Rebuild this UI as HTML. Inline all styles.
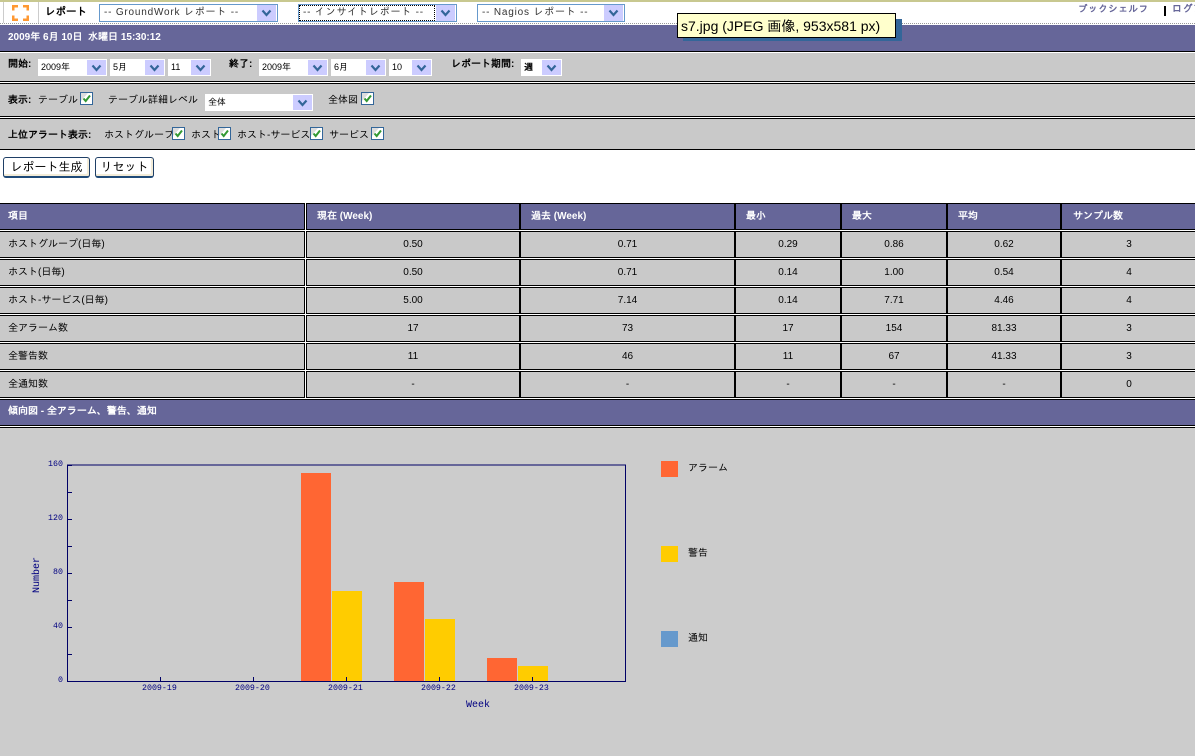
<!DOCTYPE html>
<html lang="ja"><head><meta charset="utf-8"><title>レポート</title>
<style>
html,body{margin:0;padding:0;background:#fff;width:1195px;height:756px;overflow:hidden}
body{position:relative;font-family:"Liberation Sans","IPAGothic","Noto Sans CJK JP",sans-serif;font-size:10px;color:#000}
div,span.a{position:absolute;box-sizing:border-box}
.t{white-space:nowrap;line-height:14px;height:14px}
.b{font-weight:bold}
.w{color:#fff;font-weight:bold}
.f{background:#c9c9c9;left:0;width:1195px}
.k{background:#000;left:0;width:1195px;height:1px}
.p{background:#666699;left:0;width:1195px}
.s{background:#fff;height:17px;white-space:nowrap;line-height:17px;padding-left:3px;font-size:9px}
.s.o{border:1px solid #6699cc;height:18px;line-height:16px;letter-spacing:.8px;color:#333;padding-left:4px;font-size:10px}
.ar{background:#ccccff;width:19px;top:1px;height:15px;right:1px}
.s.o .ar{top:0;right:1px;height:16px}
.ar svg{position:absolute;left:4px;top:4px;width:11px;height:8px}
.ck{width:13px;height:13px;background:#fff;border:1px solid #336699}
.ck svg{position:absolute;left:0;top:0;width:11px;height:11px}
.btn{background:#fff;border:1px solid #1f3f66;border-right-color:#1f3f66;border-bottom:2px solid #1f4a78;border-radius:3px;height:21px;top:157px;text-align:center;line-height:19px;font-size:12px;box-shadow:inset -2px -2px 0 #f3ecd8}
.c{background:#c9c9c9;border:1px solid #000;height:27px;line-height:25px;white-space:nowrap}
.c.h{background:#666699;color:#fff;font-weight:bold}
.n{text-align:center}
.m{font-family:"Liberation Mono",monospace;font-size:8.3px;color:#000080;white-space:nowrap;line-height:10px;height:10px}
.ax{background:#000066}
</style></head><body>
<svg width="0" height="0" style="position:absolute"><defs>
<symbol id="v" viewBox="0 0 11 8"><path d="M1.5 1.5 L5.5 6 L9.5 1.5" fill="none" stroke="#336699" stroke-width="2.2"/></symbol>
<symbol id="g" viewBox="0 0 11 11"><path d="M0 0H7L0 8Z" fill="#ddd"/><path d="M2.5 5.5 L4.7 8 L9 2.5" fill="none" stroke="#339933" stroke-width="2"/></symbol>
</defs></svg>

<div style="left:0;top:0;width:1195px;height:2px;background:#c8c890"></div>
<div style="left:3px;top:2px;width:1px;height:21px;background:#ccc"></div>
<div style="left:38px;top:2px;width:1px;height:21px;background:#ccc"></div>
<svg style="position:absolute;left:12px;top:5px" width="17" height="16" viewBox="0 0 17 16"><path d="M0 0H6V2.500H2.500V5.500H0ZM11 0H17V5.500H14.500V2.500H11ZM0 10.500H2.500V13.500H6V16H0ZM14.500 10.500H17V16H11V13.500H14.500Z" fill="#ff9933"/></svg>
<div class="t b" style="left:45px;top:5px;font-size:10.5px">レポート</div>
<div class="s o" style="left:99px;top:4px;width:179px">-- GroundWork レポート --<div class="ar"><svg><use href="#v"/></svg></div></div>
<div class="s o" style="left:298px;top:4px;width:159px;border-color:#6699cc">-- インサイトレポート --<div class="ar"><svg><use href="#v"/></svg></div></div>
<div style="left:299px;top:5px;width:136px;height:16px;border:1px dotted #000"></div>
<div class="s o" style="left:477px;top:4px;width:148px">-- Nagios レポート --<div class="ar"><svg><use href="#v"/></svg></div></div>
<div class="t b" style="left:1078px;top:3px;color:#666699;letter-spacing:.6px;font-size:9.5px">ブックシェルフ</div>
<div style="left:1164px;top:6px;width:2px;height:10px;background:#000"></div>
<div class="t b" style="left:1172px;top:3px;color:#666699;letter-spacing:.6px;font-size:10px">ログアウト</div>
<div style="left:0;top:23px;width:1195px;height:2px;border-top:1px dotted #999"></div>

<div class="p" style="top:25px;height:26px"></div>
<div class="t w" style="left:8px;top:31px;font-size:10px">2009年 6月 10日&nbsp; 水曜日 15:30:12</div>
<div class="k" style="top:51px"></div>

<div class="f" style="top:53px;height:28px"></div>
<div class="k" style="top:81px"></div>
<div class="k" style="top:83px"></div>
<div class="f" style="top:84px;height:32px"></div>
<div class="k" style="top:116px"></div>
<div class="k" style="top:118px"></div>
<div class="f" style="top:119px;height:30px"></div>
<div class="k" style="top:149px"></div>

<div class="t b" style="left:8px;top:58px">開始:</div>
<div class="s" style="left:38px;top:59px;width:69px">2009年<div class="ar"><svg><use href="#v"/></svg></div></div>
<div class="s" style="left:110px;top:59px;width:55px">5月<div class="ar"><svg><use href="#v"/></svg></div></div>
<div class="s" style="left:168px;top:59px;width:43px">11<div class="ar"><svg><use href="#v"/></svg></div></div>
<div class="t b" style="left:229px;top:58px">終了:</div>
<div class="s" style="left:259px;top:59px;width:69px">2009年<div class="ar"><svg><use href="#v"/></svg></div></div>
<div class="s" style="left:331px;top:59px;width:55px">6月<div class="ar"><svg><use href="#v"/></svg></div></div>
<div class="s" style="left:389px;top:59px;width:43px">10<div class="ar"><svg><use href="#v"/></svg></div></div>
<div class="t b" style="left:451px;top:58px">レポート期間:</div>
<div class="s" style="left:521px;top:59px;width:41px;font-weight:bold">週<div class="ar"><svg><use href="#v"/></svg></div></div>

<div class="t b" style="left:8px;top:94px">表示:</div>
<div class="t" style="left:38px;top:94px">テーブル</div>
<div class="ck" style="left:80px;top:92px"><svg><use href="#g"/></svg></div>
<div class="t" style="left:108px;top:94px">テーブル詳細レベル</div>
<div class="s" style="left:205px;top:94px;width:108px">全体<div class="ar"><svg><use href="#v"/></svg></div></div>
<div class="t" style="left:328px;top:94px">全体図</div>
<div class="ck" style="left:361px;top:92px"><svg><use href="#g"/></svg></div>

<div class="t b" style="left:8px;top:129px">上位アラート表示:</div>
<div class="t" style="left:104px;top:129px">ホストグループ</div>
<div class="ck" style="left:172px;top:127px"><svg><use href="#g"/></svg></div>
<div class="t" style="left:191px;top:129px">ホスト</div>
<div class="ck" style="left:218px;top:127px"><svg><use href="#g"/></svg></div>
<div class="t" style="left:237px;top:129px">ホスト-サービス</div>
<div class="ck" style="left:310px;top:127px"><svg><use href="#g"/></svg></div>
<div class="t" style="left:329px;top:129px">サービス</div>
<div class="ck" style="left:371px;top:127px"><svg><use href="#g"/></svg></div>

<div class="btn" style="left:3px;width:87px">レポート生成</div>
<div class="btn" style="left:95px;width:59px">リセット</div>

<!-- table header -->
<div class="c h" style="top:203px;left:-1px;width:306px;padding-left:8px">項目</div>
<div class="c h" style="top:203px;left:306px;width:214px;padding-left:10px">現在 (Week)</div>
<div class="c h" style="top:203px;left:520px;width:215px;padding-left:10px">過去 (Week)</div>
<div class="c h" style="top:203px;left:735px;width:106px;padding-left:10px">最小</div>
<div class="c h" style="top:203px;left:841px;width:106px;padding-left:10px">最大</div>
<div class="c h" style="top:203px;left:947px;width:114px;padding-left:10px">平均</div>
<div class="c h" style="top:203px;left:1061px;width:136px;padding-left:11px">サンプル数</div>

<!-- rows -->
<div class="c" style="top:231px;left:-1px;width:306px;padding-left:8px">ホストグループ(日毎)</div>
<div class="c n" style="top:231px;left:306px;width:214px">0.50</div>
<div class="c n" style="top:231px;left:520px;width:215px">0.71</div>
<div class="c n" style="top:231px;left:735px;width:106px">0.29</div>
<div class="c n" style="top:231px;left:841px;width:106px">0.86</div>
<div class="c n" style="top:231px;left:947px;width:114px">0.62</div>
<div class="c n" style="top:231px;left:1061px;width:136px">3</div>

<div class="c" style="top:259px;left:-1px;width:306px;padding-left:8px">ホスト(日毎)</div>
<div class="c n" style="top:259px;left:306px;width:214px">0.50</div>
<div class="c n" style="top:259px;left:520px;width:215px">0.71</div>
<div class="c n" style="top:259px;left:735px;width:106px">0.14</div>
<div class="c n" style="top:259px;left:841px;width:106px">1.00</div>
<div class="c n" style="top:259px;left:947px;width:114px">0.54</div>
<div class="c n" style="top:259px;left:1061px;width:136px">4</div>

<div class="c" style="top:287px;left:-1px;width:306px;padding-left:8px">ホスト-サービス(日毎)</div>
<div class="c n" style="top:287px;left:306px;width:214px">5.00</div>
<div class="c n" style="top:287px;left:520px;width:215px">7.14</div>
<div class="c n" style="top:287px;left:735px;width:106px">0.14</div>
<div class="c n" style="top:287px;left:841px;width:106px">7.71</div>
<div class="c n" style="top:287px;left:947px;width:114px">4.46</div>
<div class="c n" style="top:287px;left:1061px;width:136px">4</div>

<div class="c" style="top:315px;left:-1px;width:306px;padding-left:8px">全アラーム数</div>
<div class="c n" style="top:315px;left:306px;width:214px">17</div>
<div class="c n" style="top:315px;left:520px;width:215px">73</div>
<div class="c n" style="top:315px;left:735px;width:106px">17</div>
<div class="c n" style="top:315px;left:841px;width:106px">154</div>
<div class="c n" style="top:315px;left:947px;width:114px">81.33</div>
<div class="c n" style="top:315px;left:1061px;width:136px">3</div>

<div class="c" style="top:343px;left:-1px;width:306px;padding-left:8px">全警告数</div>
<div class="c n" style="top:343px;left:306px;width:214px">11</div>
<div class="c n" style="top:343px;left:520px;width:215px">46</div>
<div class="c n" style="top:343px;left:735px;width:106px">11</div>
<div class="c n" style="top:343px;left:841px;width:106px">67</div>
<div class="c n" style="top:343px;left:947px;width:114px">41.33</div>
<div class="c n" style="top:343px;left:1061px;width:136px">3</div>

<div class="c" style="top:371px;left:-1px;width:306px;padding-left:8px">全通知数</div>
<div class="c n" style="top:371px;left:306px;width:214px">-</div>
<div class="c n" style="top:371px;left:520px;width:215px">-</div>
<div class="c n" style="top:371px;left:735px;width:106px">-</div>
<div class="c n" style="top:371px;left:841px;width:106px">-</div>
<div class="c n" style="top:371px;left:947px;width:114px">-</div>
<div class="c n" style="top:371px;left:1061px;width:136px">0</div>

<!-- section -->
<div class="k" style="top:399px"></div>
<div class="p" style="top:400px;height:25px"></div>
<div class="t w" style="left:8px;top:405px">傾向図 - 全アラーム、警告、通知</div>
<div class="k" style="top:425px"></div>
<div class="k" style="top:427px"></div>
<div style="left:0;top:428px;width:1195px;height:328px;background:#cccccc"></div>

<!-- chart -->
<svg style="position:absolute;left:0;top:428px" width="640" height="328" viewBox="0 428 640 328" shape-rendering="crispEdges">
<rect x="301" y="473" width="30" height="208" fill="#ff6633"/>
<rect x="332" y="591" width="30" height="90" fill="#ffcc00"/>
<rect x="394" y="582" width="30" height="99" fill="#ff6633"/>
<rect x="425" y="619" width="30" height="62" fill="#ffcc00"/>
<rect x="487" y="658" width="30" height="23" fill="#ff6633"/>
<rect x="518" y="666" width="30" height="15" fill="#ffcc00"/>
<rect x="67.500" y="465" width="558" height="216.500" fill="none" stroke="#000066" stroke-width="1"/>
<path d="M68 465.500h4M68 492.500h4M68 519.500h4M68 546.500h4M68 573.500h4M68 600.500h4M68 627.500h4M68 654.500h4M160.500 677v4M253.500 677v4M346.500 677v4M439.500 677v4M532.500 677v4" stroke="#000066" stroke-width="1"/>
</svg>
<div class="m" style="left:48px;top:460px">160</div>
<div class="m" style="left:48px;top:514px">120</div>
<div class="m" style="left:53px;top:568px">80</div>
<div class="m" style="left:53px;top:622px">40</div>
<div class="m" style="left:58px;top:676px">0</div>
<div class="m" style="left:142px;top:684px">2009-19</div>
<div class="m" style="left:235px;top:684px">2009-20</div>
<div class="m" style="left:328px;top:684px">2009-21</div>
<div class="m" style="left:421px;top:684px">2009-22</div>
<div class="m" style="left:514px;top:684px">2009-23</div>
<div class="m" style="left:466px;top:700px;font-size:10px;line-height:12px;height:12px">Week</div>
<div class="m" style="left:18px;top:569px;width:40px;font-size:10px;line-height:12px;height:12px;text-align:center;transform:rotate(-90deg)">Number</div>

<div style="left:661px;top:461px;width:17px;height:16px;background:#ff6633"></div>
<div class="t" style="left:688px;top:462px">アラーム</div>
<div style="left:661px;top:546px;width:17px;height:16px;background:#ffcc00"></div>
<div class="t" style="left:688px;top:547px">警告</div>
<div style="left:661px;top:631px;width:17px;height:16px;background:#6699cc"></div>
<div class="t" style="left:688px;top:632px">通知</div>

<!-- tooltip -->
<div style="left:683px;top:19px;width:219px;height:22px;background:#336699"></div>
<div style="left:677px;top:13px;width:219px;height:25px;background:#ffffcc;border:1px solid #000;line-height:24px;padding-left:3px;font-size:14px;white-space:nowrap">s7.jpg (JPEG 画像, 953x581 px)</div>
</body></html>
